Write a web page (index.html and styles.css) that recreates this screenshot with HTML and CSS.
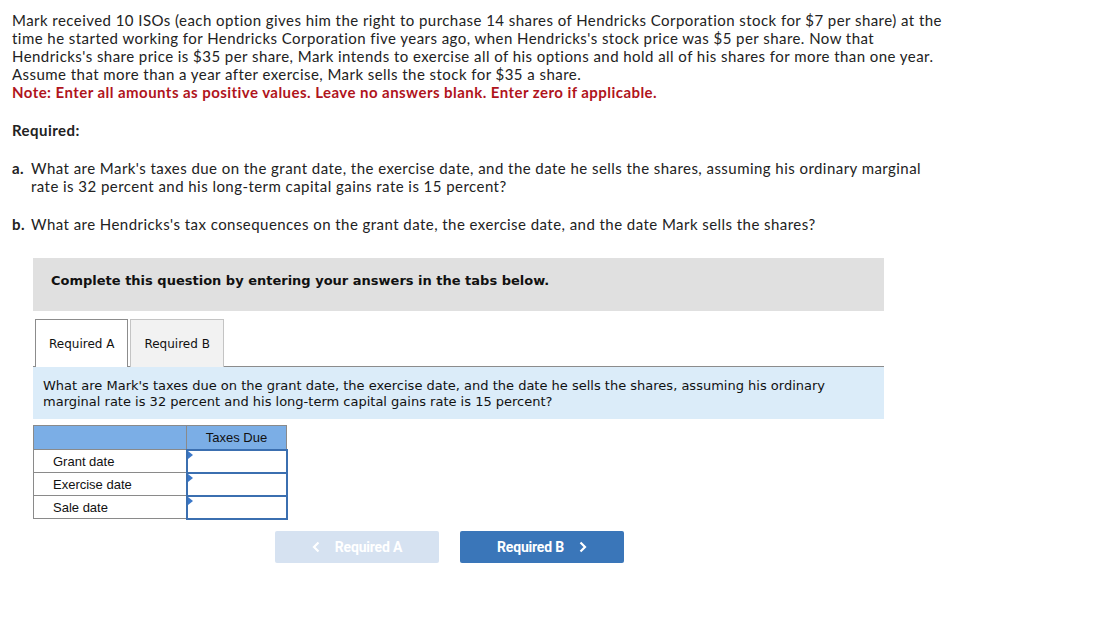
FILE: index.html
```html
<!DOCTYPE html>
<html>
<head>
<meta charset="utf-8">
<link rel="stylesheet" href="styles.css">
</head>
<body>
<div class="page">
  <p class="intro">Mark received 10 ISOs (each option gives him the right to purchase 14 shares of Hendricks Corporation stock for $7 per share) at the time he started working for Hendricks Corporation five years ago, when Hendricks's stock price was $5 per share. Now that Hendricks's share price is $35 per share, Mark intends to exercise all of his options and hold all of his shares for more than one year. Assume that more than a year after exercise, Mark sells the stock for $35 a share.<br><span class="note">Note: Enter all amounts as positive values. Leave no answers blank. Enter zero if applicable.</span></p>
  <p class="req">Required:</p>
  <div class="item"><b>a.</b><span>What are Mark's taxes due on the grant date, the exercise date, and the date he sells the shares, assuming his ordinary marginal rate is 32 percent and his long-term capital gains rate is 15 percent?</span></div>
  <div class="item item-b"><b>b.</b><span>What are Hendricks's tax consequences on the grant date, the exercise date, and the date Mark sells the shares?</span></div>

  <div class="panel">
    <div class="banner">Complete this question by entering your answers in the tabs below.</div>
    <div class="tabs">
      <div class="tab active">Required A</div>
      <div class="tab">Required B</div>
    </div>
    <div class="question">What are Mark's taxes due on the grant date, the exercise date, and the date he sells the shares, assuming his ordinary marginal rate is 32 percent and his long-term capital gains rate is 15 percent?</div>
    <table class="grid">
      <tr class="head"><th class="c1"></th><th class="c2">Taxes Due</th></tr>
      <tr><td class="c1">Grant date</td><td class="c2 inp"><span class="flag"></span></td></tr>
      <tr><td class="c1">Exercise date</td><td class="c2 inp"><span class="flag"></span></td></tr>
      <tr><td class="c1">Sale date</td><td class="c2 inp"><span class="flag"></span></td></tr>
    </table>
    <div class="nav">
      <div class="btn prev"><svg class="chev left" width="8" height="12" viewBox="0 0 8 12"><path d="M6.5 1.5 L2 6 L6.5 10.5" fill="none" stroke="#fff" stroke-width="2.2"/></svg>Required A</div>
      <div class="btn next">Required B<svg class="chev right" width="8" height="12" viewBox="0 0 8 12"><path d="M1.5 1.5 L6 6 L1.5 10.5" fill="none" stroke="#fff" stroke-width="2.2"/></svg></div>
    </div>
  </div>
</div>
</body>
</html>
```

FILE: styles.css
```css
* { box-sizing: border-box; }
body { margin: 0; background: #fff; }
.page { padding: 11px 0 0 12px; font-family: Lato, "Open Sans", sans-serif; font-size: 15px; letter-spacing: 0.45px; color: #222; }
.intro { margin: 0; width: 945px; line-height: 18px; }
.note { color: #b0141c; font-weight: bold; }
.req { margin: 20px 0 0; font-weight: bold; line-height: 18px; }
.item { display: flex; margin-top: 20px; line-height: 18px; width: 935px; }
.item b { width: 19px; flex: none; }
.item-b { margin-top: 20px; }
.panel { margin: 25px 0 0 21px; width: 851px; font-family: "DejaVu Sans", Verdana, sans-serif; letter-spacing: 0; }
.banner { background: #e0e0e0; height: 53px; padding: 15px 0 0 18px; font-size: 13px; font-weight: bold; color: #111; }
.tabs { display: flex; margin-top: 8px; padding-left: 2px; border-bottom: 1px solid #8c8c8c; height: 48px; gap: 2px; }
.tab { height: 48px; padding: 0 13px; display: flex; align-items: center; font-size: 12px; color: #111; border: 1px solid #c4c4c4; border-bottom: none; background: #f2f2f2; }
.tab.active { background: #fff; border-color: #8c8c8c; margin-bottom: -1px; }
.question { background: #dbecf9; padding: 11px 10px 0 10px; height: 52px; font-size: 13px; line-height: 16px; color: #111; }
.grid { margin-top: 6px; border-collapse: collapse; font-family: "Liberation Sans", Arial, sans-serif; font-size: 13px; color: #111; }
.grid th, .grid td { border: 1px solid #8a8a8a; padding: 0; height: 23px; }
.grid .head th { background: #7baee6; font-weight: normal; font-size: 13px; height: 24px; }
.grid .c1 { width: 153px; padding-left: 19px; text-align: left; }
.grid .c2 { width: 100px; text-align: center; }
.grid td.inp { position: relative; border: 2px solid #3b6fb0; }
.flag { position: absolute; left: 0; top: 0; width: 0; height: 0; border-top: 4px solid transparent; border-bottom: 4px solid transparent; border-left: 5px solid #3b78c9; }
.nav { display: flex; gap: 21px; margin: 11px 0 0 242px; }
.btn { width: 164px; height: 32px; border-radius: 2px; display: flex; align-items: center; justify-content: center; font-family: Roboto, "Liberation Sans", sans-serif; font-weight: bold; font-size: 14px; color: #fff; letter-spacing: -0.2px; }
.btn.prev { background: #d6e2f1; }
.btn.next { background: #3a76b9; }
.chev { display: block; }
.chev.left { margin-right: 15px; }
.chev.right { margin-left: 15px; }
```
